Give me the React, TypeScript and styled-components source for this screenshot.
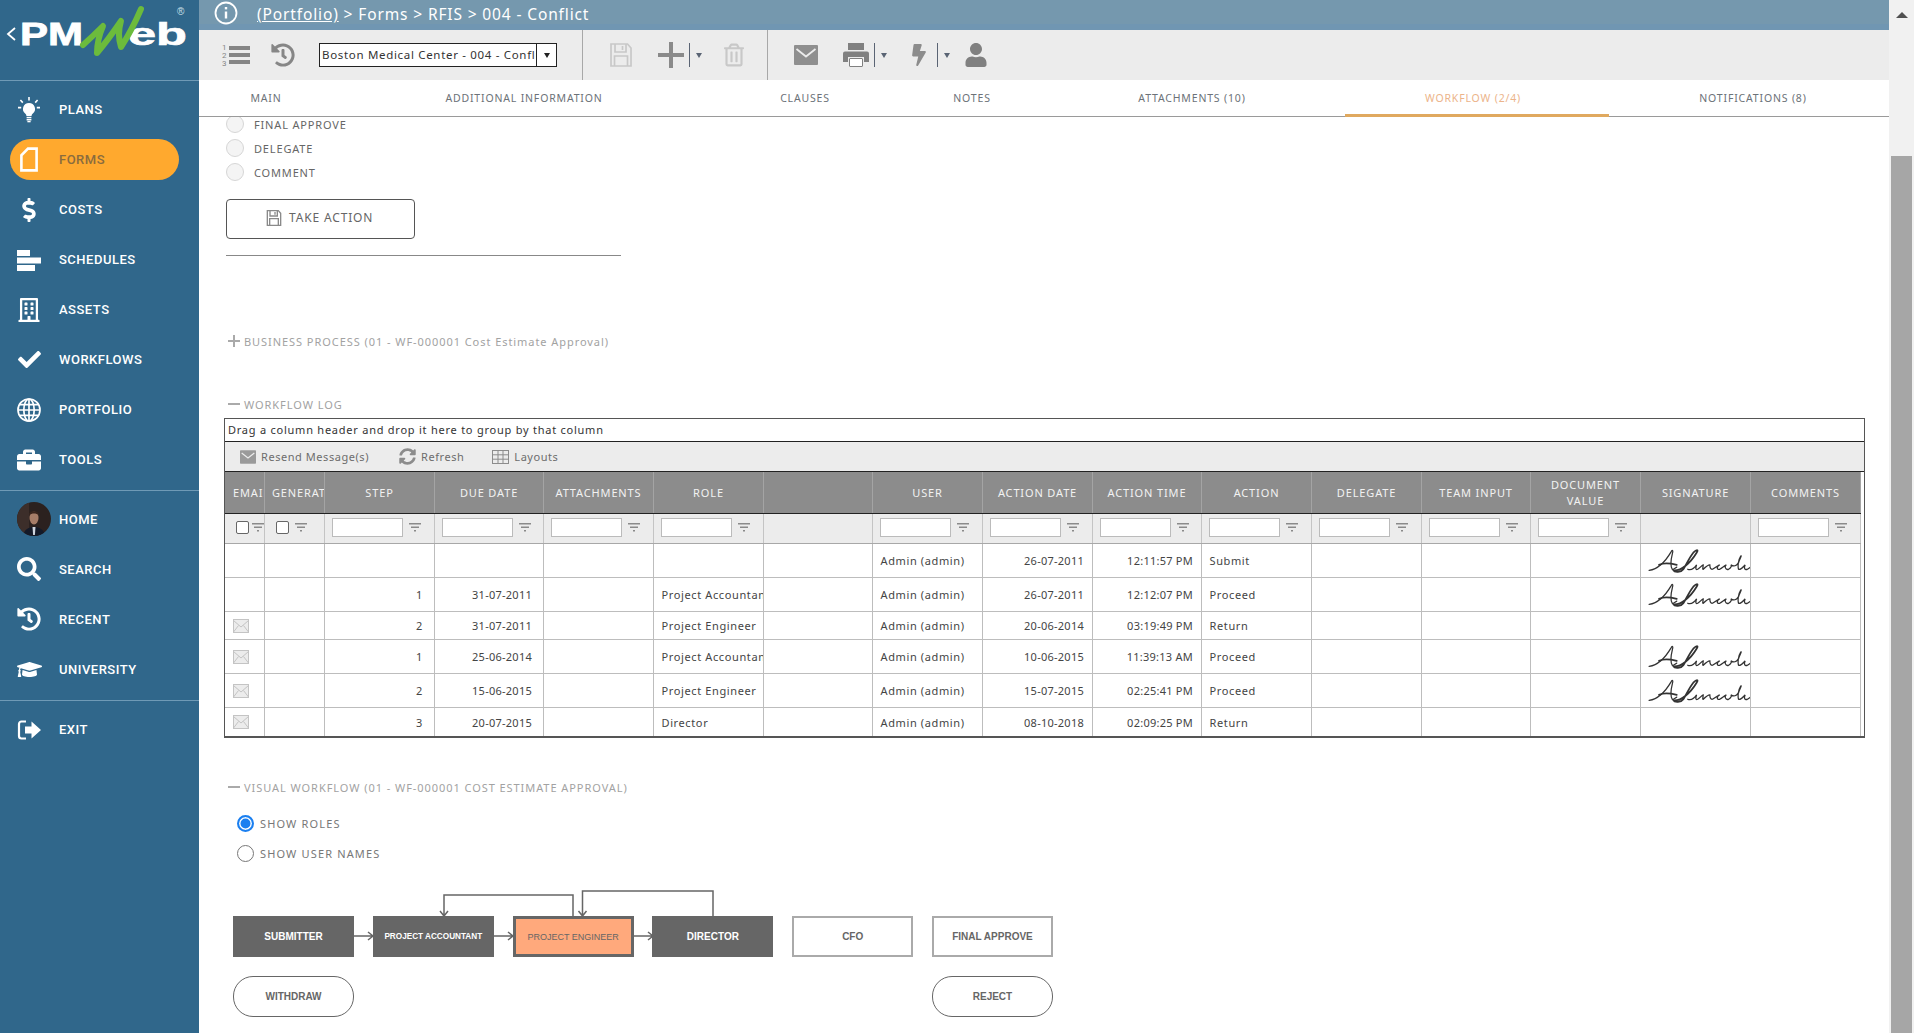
import React from "react";
import styled, { createGlobalStyle } from "styled-components";
import {
  FaDollarSign, FaRegBuilding, FaCheck, FaBriefcase, FaSearch, FaHistory, FaGraduationCap,
  FaRegTrashAlt, FaBolt, FaUser, FaSyncAlt,
} from "react-icons/fa";

const UI = `"Noto Sans", Roboto, sans-serif`;
const NAVFONT = `Roboto, "Liberation Sans", sans-serif`;

const Global = createGlobalStyle`
  html, body { margin: 0; padding: 0; overflow: hidden; background: #fff; }
  * { box-sizing: border-box; }
`;

const Shell = styled.div`display: flex; width: 1914px; height: 1033px; overflow: hidden; font-family: ${UI};`;
const Sidebar = styled.aside`width: 199px; flex: none; background: #30678b; display: flex; flex-direction: column;`;
const LogoBox = styled.div`height: 81px; border-bottom: 1px solid #6f9ab6; flex: none;`;
const NavGroup = styled.nav`display: flex; flex-direction: column; gap: 9px; padding: ${p => p.$pt}px 0 ${p => p.$pb}px; border-bottom: ${p => (p.$last ? "none" : "1px solid #6f9ab6")};`;
const NavItem = styled.a`
  display: flex; align-items: center; height: 41px; width: 169px; margin-left: 10px; padding-left: 7px;
  border-radius: 21px; background: ${p => (p.$active ? "#ffa92e" : "transparent")};
  color: ${p => (p.$active ? "#8a6c3e" : "#fff")}; font: 500 13px ${NAVFONT}; letter-spacing: .5px;
`;
const NavIcon = styled.span`width: 24px; height: 26px; margin-right: 18px; display: flex; align-items: center; justify-content: ${p => (p.$start ? "flex-start" : "center")}; color: #fff; flex: none;
  svg { flex: none; }
`;

const Main = styled.div`flex: 1; min-width: 0; display: flex; flex-direction: column;`;
const TopBar = styled.header`
  height: 30px; flex: none; background: #7598ae; border-bottom: 6px solid #7096b2; color: #fff;
  display: flex; align-items: flex-start; padding-left: 15px;
`;
const InfoIcon = styled.svg`width: 24px; height: 24px; margin-top: 1px; margin-right: 19px; flex: none;`;
const Crumb = styled.div`font-size: 15.5px; line-height: 29px; letter-spacing: .87px; white-space: nowrap;`;
const CrumbLink = styled.span`text-decoration: underline;`;

const ToolBar = styled.div`height: 50px; flex: none; background: #ececec; display: flex; align-items: center; padding-left: 23px; color: #8c8c8c;`;
const ToolIcon = styled.span`
  display: flex; width: ${p => p.$w || 24}px; height: 24px; align-items: center; justify-content: center; flex: none;
  margin-left: ${p => p.$ml || 0}px; color: ${p => p.$c || "#868686"};
`;
const PickWrap = styled.div`
  width: 238px; height: 24px; margin-left: 24px; border: 1px solid #222; background: #fff; display: flex; flex: none;
  font-size: 11.5px; letter-spacing: .68px; color: #333;
`;
const PickText = styled.div`width: 217px; padding-left: 2px; line-height: 22px; white-space: nowrap; overflow: hidden; border-right: 1px solid #222;`;
const PickArrow = styled.div`flex: 1; display: flex; align-items: center; justify-content: center;`;
const Tri = styled.i`display: block; width: 0; height: 0; border-left: 3.5px solid transparent; border-right: 3.5px solid transparent; border-top: 5px solid ${p => p.$c || "#222"};`;
const VSep = styled.div`width: 1px; height: 50px; background: #a8a8a8; flex: none; margin-left: ${p => p.$ml}px;`;
const MiniSplit = styled.div`display: flex; align-items: center; margin-left: ${p => p.$ml}px; flex: none; width: 15px; height: 24px; border-left: 1px solid #5a6474; padding-left: 6px;`;

const Tabs = styled.div`height: 37px; flex: none; display: flex; border-bottom: 1px solid #9a9a9a; background: #fff;`;
const Tab = styled.div`
  width: ${p => p.$w}px; flex: none; text-align: center; padding: 10px ${p => p.$pr || 0}px 0 ${p => p.$pl || 0}px; font-size: 10.5px; line-height: 16px; letter-spacing: .83px;
  color: ${p => (p.$active ? "#ecb48a" : "#6c7278")}; height: 37px;
  border-bottom: ${p => (p.$active ? "3px solid #e0a95f" : "none")}; white-space: nowrap;
`;

const Content = styled.main`flex: 1; min-height: 0; overflow: hidden; padding-left: 25px; background: #fff;`;
const RadioList = styled.div`margin-top: -5px; margin-left: 2px;`;
const RadioRow = styled.div`height: 24px; display: flex; align-items: center; font-size: 11px; letter-spacing: .84px; color: #666;`;
const Ghost = styled.span`width: 18px; height: 18px; border-radius: 50%; background: #f4f4f4; border: 1px solid #d6d6d6; margin-right: 10px; flex: none;`;
const ActionBtn = styled.button`
  display: flex; align-items: center; width: 189px; height: 40px; margin: 15px 0 0 2px; padding: 0 0 3px 39px; background: #fff;
  border: 1px solid #555; border-radius: 4px; font: 12px ${UI}; letter-spacing: .85px; color: #666; gap: 7px;
`;
const Rule = styled.hr`width: 395px; height: 1px; background: #888; border: 0; margin: 16px 0 0 2px;`;
const SectionHead = styled.div`
  display: flex; align-items: center; height: 16px; margin-top: ${p => p.$mt}px; margin-left: 4px; padding-bottom: 2px; font-size: 11px; letter-spacing: .94px;
  color: #a2a2a2; white-space: nowrap; gap: 4px;
`;
const Sign = styled.span`display: block; position: relative; width: 12px; height: 12px; flex: none;
  &::before { content: ""; position: absolute; left: 0; right: 0; top: 5px; height: 2px; background: #aaa; }
  &::after { content: ""; position: absolute; top: 0; bottom: 0; left: 5px; width: 2px; background: #aaa; display: ${p => (p.$plus ? "block" : "none")}; }
`;

const Grid = styled.section`width: 1641px; margin-top: 5px; border: 1px solid #555; border-bottom-width: 2px; background: #fff;`;
const GroupBar = styled.div`height: 23px; border-bottom: 1px solid #222; padding-left: 3px; font-size: 11px; line-height: 21px; letter-spacing: .76px; color: #333;`;
const GridTools = styled.div`height: 30px; background: #ececec; border-bottom: 1px solid #222; display: flex; align-items: center; padding-left: 15px; font-size: 11px; letter-spacing: .55px; color: #6c6c6c;`;
const GridTool = styled.span`display: flex; align-items: center; gap: 5px; margin-right: ${p => p.$mr}px;`;

const COLS = "40px 60px 110px 109px 110px 110px 109px 110px 110px 109px 110px 110px 109px 110px 110px 110px";
const Row = styled.div`
  display: grid; grid-template-columns: ${COLS}; width: 1636px; height: ${p => p.$h}px;
  background: ${p => p.$bg || "#fff"}; border-bottom: ${p => (p.$noLine ? "none" : `1px solid ${p.$line || "#bdbdbd"}`)};
`;
const HeadCell = styled.div`
  border-right: 1px solid #a4a4a4; color: #f2f2f2; font-size: 11px; letter-spacing: .86px; line-height: 16px; text-align: center;
  padding: 0 ${p => p.$pad ?? 8}px; overflow: hidden; white-space: nowrap; display: flex; align-items: center; justify-content: ${p => (p.$clip ? "flex-start" : "center")};
`;
const HeadText = styled.span`white-space: pre-line;`;
const FilterCell = styled.div`border-right: 1px solid #c4c4c4; display: flex; align-items: center; padding: 0 0 3px ${p => p.$pad ?? 7}px; gap: ${p => p.$gap ?? 6}px; overflow: hidden;`;
const FilterInput = styled.div`width: 71px; height: 19px; background: #fff; border: 1px solid #bbb; flex: none;`;
const Check = styled.div`width: 13px; height: 13px; background: #fff; border: 1px solid #666; border-radius: 2px; flex: none;`;
const Cell = styled.div`
  border-right: 1px solid #bdbdbd; display: flex; align-items: center; justify-content: ${p => (p.$right ? "flex-end" : "flex-start")};
  padding: 0 ${p => p.$pr ?? 8}px 0 ${p => p.$pl ?? 7.5}px; font-size: 11px; letter-spacing: ${p => (p.$num ? .25 : .62)}px; color: #444; white-space: nowrap; overflow: hidden;
`;

const VisualRadioRow = styled.label`display: flex; align-items: center; height: 24px; margin: ${p => p.$mt}px 0 0 13px; font-size: 11px; letter-spacing: 1.15px; color: #777;`;
const Dot = styled.span`
  width: 17px; height: 17px; border-radius: 50%; margin-right: 6px; flex: none; background: #fff;
  border: ${p => (p.$on ? "2px solid #1a7ff0" : "1px solid #777")};
  box-shadow: ${p => (p.$on ? "inset 0 0 0 1.5px #fff, inset 0 0 0 8px #1a7ff0" : "none")};
`;
const Diagram = styled.div`
  position: relative; margin-top: 14px; padding: 37px 0 0 9px;
  display: grid; grid-template-columns: repeat(6, 121px); column-gap: 18.8px; row-gap: 19px; grid-template-rows: 41px 41px; width: 840px;
`;
const Arrows = styled.svg`position: absolute; left: 0; top: 0; width: 840px; height: 80px; pointer-events: none;`;
const NodeBox = styled.div`
  display: flex; align-items: center; justify-content: center; white-space: nowrap; overflow: hidden;
  font: 700 ${p => p.$fs || 10}px "Liberation Sans", Arial, sans-serif;
  background: ${p => (p.$kind === "dark" ? "#666" : p.$kind === "cur" ? "#ffa97c" : "#fff")};
  color: ${p => (p.$kind === "dark" ? "#fff" : "#666")};
  border: ${p => (p.$kind === "dark" ? "none" : p.$kind === "cur" ? "3px solid #666" : "2px solid #aaa")};
  font-weight: ${p => (p.$kind === "cur" ? 400 : 700)};
`;
const PillNode = styled.div`
  grid-row: 2; grid-column: ${p => p.$col}; display: flex; align-items: center; justify-content: center;
  border: 1px solid #666; border-radius: 20px; font: 700 10px "Liberation Sans", Arial, sans-serif; color: #666;
`;

const Scroll = styled.div`width: 25px; flex: none; background: #f1f1f1; display: flex; flex-direction: column; align-items: center; padding-top: 12px;`;
const ScrollUp = styled.i`display: block; width: 0; height: 0; border-left: 6px solid transparent; border-right: 6px solid transparent; border-bottom: 6px solid #505050;`;
const Thumb = styled.div`width: 21px; flex: 1; margin-top: 138px; background: #a6a6a6;`;

const Bulb = () => (
  <svg width="24" height="26" viewBox="0 0 24 26" fill="#fff">
    <path d="M12 6a6 6 0 0 0-3.6 10.8c.7.6 1 1.2 1 2.2h5.2c0-1 .3-1.6 1-2.2A6 6 0 0 0 12 6z" />
    <rect x="9.6" y="19.8" width="4.8" height="1.5" /><rect x="9.6" y="22" width="4.8" height="1.5" /><rect x="10.4" y="24" width="3.2" height="1.3" />
    <path d="M12 0v3.4M3.4 3l2.4 2.6M20.6 3l-2.4 2.6M1 10.6h3.2M19.8 10.6H23" stroke="#fff" strokeWidth="1.6" />
  </svg>
);
const FormIcon = () => (
  <svg width="20" height="25" viewBox="0 0 20 25" fill="none" stroke="#fff" strokeWidth="2.6">
    <path d="M9 1.6h8.6v21.8H2.4V8.4z" />
  </svg>
);
const SchedIcon = () => (
  <svg width="24" height="24" viewBox="0 0 24 24" fill="#fff">
    <rect x="0" y="2" width="13" height="6" /><rect x="0" y="9.5" width="24" height="6" /><rect x="0" y="17" width="18" height="6" />
  </svg>
);
const GlobeIcon = () => (
  <svg width="24" height="24" viewBox="0 0 24 24" fill="none" stroke="#fff" strokeWidth="1.7">
    <circle cx="12" cy="12" r="11" /><ellipse cx="12" cy="12" rx="5.2" ry="11" /><path d="M12 1v22M1 12h22M2.6 6.6h18.8M2.6 17.4h18.8" />
  </svg>
);
const ExitIcon = () => (
  <svg width="24" height="24" viewBox="0 0 24 24" fill="none">
    <path d="M9 3.5H4.5a2.5 2.5 0 0 0-2.5 2.5v12a2.5 2.5 0 0 0 2.5 2.5H9" stroke="#fff" strokeWidth="2.2" />
    <path d="M8 8.5h6.5V3.6L24 12l-9.5 8.4v-4.9H8z" fill="#fff" />
  </svg>
);
const Avatar = () => (
  <svg width="34" height="34" viewBox="0 0 34 34">
    <defs><clipPath id="av"><circle cx="17" cy="17" r="17" /></clipPath></defs>
    <g clipPath="url(#av)">
      <rect width="34" height="34" fill="#2b211f" /><rect x="0" y="0" width="12" height="34" fill="#3c2e2a" />
      <path d="M6 34c1-7 6-9 11-9s10 2 11 9z" fill="#141a28" />
      <ellipse cx="17" cy="16" rx="4.500" ry="6.500" fill="#a67d68" /><path d="M12 13c0-5 10-5 10 0-3-2-7-2-10 0z" fill="#3a261e" />
      <path d="M15.500 25h3l-.6 8h-1.800z" fill="#cfd5de" />
    </g>
  </svg>
);
const ListIcon = () => (
  <svg width="28" height="26" viewBox="0 0 28 26" fill="#858585">
    <rect x="7" y="4" width="21" height="4" /><rect x="7" y="11" width="21" height="4" /><rect x="7" y="18" width="21" height="4" />
    <text x="0" y="8" fontSize="8" fontFamily="Roboto">1</text><text x="0" y="16" fontSize="8" fontFamily="Roboto">2</text><text x="0" y="24" fontSize="8" fontFamily="Roboto">3</text>
  </svg>
);
const Floppy = ({ s = 24, c = "#c8c8c8", w = 1.7 }: { s?: number; c?: string; w?: number }) => (
  <svg width={s} height={s} viewBox="0 0 24 24" fill="none" stroke={c} strokeWidth={w}>
    <path d="M2 1h16.500L22 5v18H2z" /><path d="M6 1v8h11V1M13.500 3v4" /><path d="M5.500 23v-10h13v10" />
  </svg>
);
const PlusIcon = () => (
  <svg width="26" height="26" viewBox="0 0 26 26" fill="#8a8a8a"><rect x="0" y="11" width="26" height="4" /><rect x="11" y="0" width="4" height="26" /></svg>
);
const PrinterIcon = () => (
  <svg width="26" height="24" viewBox="0 0 26 24" fill="#808080">
    <rect x="5" y="0" width="16" height="7" />
    <path d="M2 8.500h22a2 2 0 0 1 2 2V19h-5v-5H5v5H0v-8.500a2 2 0 0 1 2-2z" />
    <rect x="6.500" y="15.500" width="13" height="8" rx=".5" fill="#fff" stroke="#808080" />
  </svg>
);
const Mail = ({ w = 24, h = 20, c = "#8f8f8f" }: { w?: number; h?: number; c?: string }) => (
  <svg width={w} height={h} viewBox="0 0 24 20">
    <rect x="0" y="0" width="24" height="20" rx="1" fill={c} />
    <path d="M2.500 4l9.500 7.500L21.500 4" fill="none" stroke="#ececec" strokeWidth="1.800" />
  </svg>
);
const RowMail = () => (
  <svg width="16" height="14" viewBox="0 0 16 14" fill="#ececec" stroke="#c4c4c4">
    <rect x=".5" y=".5" width="15" height="13" /><path d="M.5 1.500L8 8l7.500-6.500M.5 13l5-6.500M15.500 13l-5-6.500" fill="none" />
  </svg>
);
const Funnel = () => (
  <svg width="12" height="11" viewBox="0 0 12 11" fill="#8a8a8a" style={{ flex: "none" }}>
    <rect x="0" y="1" width="12" height="1.500" /><rect x="2" y="4.500" width="8" height="1.500" /><rect x="5" y="8" width="2" height="1.500" />
  </svg>
);
const Signature = () => (
  <svg width="109" height="32" viewBox="0 0 98 29" fill="none" stroke="#333" strokeWidth="1.150" strokeLinecap="round" style={{ flex: "none" }}>
    <path d="M7 23C14 22 20 18 27 6c1-2 2-1 1 2-1 4-2 11 0 14 1 1 2-1 4-2" />
    <path d="M16 18c4-2 12-1 16 0" strokeWidth="1.700" />
    <path d="M30 23c6 0 14-6 20-16 2-3 0-3-3 0-4 5-7 12-9 15-2 3-8 3-9 1" strokeWidth="1.600" />
    <path d="M42 22c3 1 6-1 8-4-1 3-1 5 1 4s4-4 5-4c0 2-1 4 0 4 2-2 4-4 6-4 0 2 0 4 2 4s4-3 7-4c-3 1-3 5 0 4 2-1 4-3 6-4-2 1-1 5 2 4 2-1 3-3 2-4 3 2 5 1 7-2 2-5 3-7 2-6-2 3-3 9-2 12 2 1 4-2 6-4-1 2-1 5 2 4 2-1 4-3 6-4" />
  </svg>
);

const navA = [
  ["PLANS", <Bulb />], ["FORMS", <FormIcon />], ["COSTS", <FaDollarSign size={24} />], ["SCHEDULES", <SchedIcon />],
  ["ASSETS", <FaRegBuilding size={24} />], ["WORKFLOWS", <FaCheck size={23} />], ["PORTFOLIO", <GlobeIcon />], ["TOOLS", <FaBriefcase size={24} />],
] as const;
const navB = [
  ["SEARCH", <FaSearch size={24} />], ["RECENT", <FaHistory size={24} />], ["UNIVERSITY", <FaGraduationCap size={25} />],
] as const;

const heads = ["EMAIL", "GENERATE", "STEP", "DUE DATE", "ATTACHMENTS", "ROLE", "", "USER", "ACTION DATE", "ACTION TIME", "ACTION", "DELEGATE", "TEAM INPUT", "DOCUMENT\nVALUE", "SIGNATURE", "COMMENTS"];
const rows = [
  { h: 34, mail: 0, step: "", due: "", role: "", d: "26-07-2011", t: "12:11:57 PM", a: "Submit", sig: 1 },
  { h: 34, mail: 0, step: "1", due: "31-07-2011", role: "Project Accountant", d: "26-07-2011", t: "12:12:07 PM", a: "Proceed", sig: 1 },
  { h: 28, mail: 1, step: "2", due: "31-07-2011", role: "Project Engineer", d: "20-06-2014", t: "03:19:49 PM", a: "Return", sig: 0 },
  { h: 34, mail: 1, step: "1", due: "25-06-2014", role: "Project Accountant", d: "10-06-2015", t: "11:39:13 AM", a: "Proceed", sig: 1 },
  { h: 34, mail: 1, step: "2", due: "15-06-2015", role: "Project Engineer", d: "15-07-2015", t: "02:25:41 PM", a: "Proceed", sig: 1 },
  { h: 28, mail: 1, step: "3", due: "20-07-2015", role: "Director", d: "08-10-2018", t: "02:09:25 PM", a: "Return", sig: 0, last: true },
];
const tabs = [
  ["MAIN", 134, 0, 0], ["ADDITIONAL INFORMATION", 382, 0, 0], ["CLAUSES", 180, 0, 0], ["NOTES", 154, 0, 0], ["ATTACHMENTS (10)", 296, 10, 0], ["WORKFLOW (2/4)", 264, 8, 0], ["NOTIFICATIONS (8)", 280, 0, 8],
] as const;
const nodes = [
  ["SUBMITTER", "dark", 10], ["PROJECT ACCOUNTANT", "dark", 8.2], ["PROJECT ENGINEER", "cur", 9], ["DIRECTOR", "dark", 10], ["CFO", "line", 10], ["FINAL APPROVE", "line", 10],
] as const;

export default function App() {
  return (
    <Shell>
      <Global />
      <Sidebar>
        <LogoBox>
          <svg width="199" height="80" viewBox="0 0 199 80">
            <path d="M15 28l-7 6 7 6" fill="none" stroke="#fff" strokeWidth="1.800" />
            <text x="20" y="45" fontFamily="Liberation Sans" fontWeight="700" fontSize="31" fill="#fff" stroke="#fff" strokeWidth=".8" textLength="63" lengthAdjust="spacingAndGlyphs">PM</text>
            <text x="128" y="45" fontFamily="Liberation Sans" fontWeight="700" fontSize="31" fill="#fff" stroke="#fff" strokeWidth=".6" textLength="59" lengthAdjust="spacingAndGlyphs">eb</text>
            <path d="M83 45Q93 36 103 26Q97 40 97 53Q108 40 121 21Q117 35 121 47Q132 30 141 9" fill="none" stroke="#6cbb3c" strokeWidth="6" strokeLinejoin="round" strokeLinecap="round" />
            <text x="177" y="15" fontFamily="Liberation Sans" fontSize="10" fill="#cfe0ea">®</text>
          </svg>
        </LogoBox>
        <NavGroup $pt={8} $pb={10}>
          {navA.map(([t, ic]) => (
            <NavItem key={t} $active={t === "FORMS"}><NavIcon>{ic}</NavIcon>{t}</NavItem>
          ))}
        </NavGroup>
        <NavGroup $pt={7.5} $pb={10}>
          <NavItem><NavIcon $start><Avatar /></NavIcon>HOME</NavItem>
          {navB.map(([t, ic]) => (
            <NavItem key={t}><NavIcon>{ic}</NavIcon>{t}</NavItem>
          ))}
        </NavGroup>
        <NavGroup $pt={8.5} $pb={0} $last>
          <NavItem><NavIcon><ExitIcon /></NavIcon>EXIT</NavItem>
        </NavGroup>
      </Sidebar>
      <Main>
        <TopBar>
          <InfoIcon viewBox="0 0 24 24" fill="none" stroke="#fff" strokeWidth="1.800">
            <circle cx="12" cy="12" r="10.500" /><path d="M12 10.500v7" strokeWidth="2.400" /><path d="M12 6v2.400" strokeWidth="2.400" />
          </InfoIcon>
          <Crumb><CrumbLink>(Portfolio)</CrumbLink> &gt; Forms &gt; RFIS &gt; 004 - Conflict</Crumb>
        </TopBar>
        <ToolBar>
          <ToolIcon $w={28}><ListIcon /></ToolIcon>
          <ToolIcon $ml={21}><FaHistory size={24} /></ToolIcon>
          <PickWrap><PickText>Boston Medical Center - 004 - Conflict</PickText><PickArrow><Tri /></PickArrow></PickWrap>
          <VSep $ml={25} />
          <ToolIcon $ml={26}><Floppy /></ToolIcon>
          <ToolIcon $ml={25} $w={26}><PlusIcon /></ToolIcon>
          <MiniSplit $ml={5}><Tri $c="#5a6474" /></MiniSplit>
          <ToolIcon $ml={20} $w={20} $c="#c8c8c8"><FaRegTrashAlt size={24} /></ToolIcon>
          <VSep $ml={23} />
          <ToolIcon $ml={26} $c="#8f8f8f"><Mail /></ToolIcon>
          <ToolIcon $ml={25} $w={26}><PrinterIcon /></ToolIcon>
          <MiniSplit $ml={5}><Tri $c="#5a6474" /></MiniSplit>
          <ToolIcon $ml={23} $w={14} $c="#8c8c8c"><FaBolt size={22} /></ToolIcon>
          <MiniSplit $ml={11}><Tri $c="#5a6474" /></MiniSplit>
          <ToolIcon $ml={12} $c="#808080"><FaUser size={24} /></ToolIcon>
        </ToolBar>
        <Tabs>
          {tabs.map(([t, w, pr, pl]) => (
            <Tab key={t} $w={w} $pr={pr} $pl={pl} $active={t.startsWith("WORKFLOW")}>{t}</Tab>
          ))}
        </Tabs>
        <Content>
          <RadioList>
            {["FINAL APPROVE", "DELEGATE", "COMMENT"].map(t => (
              <RadioRow key={t}><Ghost />{t}</RadioRow>
            ))}
          </RadioList>
          <ActionBtn><Floppy s={16} c="#8a8a8a" w={2} />TAKE ACTION</ActionBtn>
          <Rule />
          <SectionHead $mt={78}><Sign $plus />BUSINESS PROCESS (01 - WF-000001 Cost Estimate Approval)</SectionHead>
          <SectionHead $mt={47}><Sign />WORKFLOW LOG</SectionHead>
          <Grid>
            <GroupBar>Drag a column header and drop it here to group by that column</GroupBar>
            <GridTools>
              <GridTool $mr={30}><Mail w={16} h={14} c="#9a9a9a" />Resend Message(s)</GridTool>
              <GridTool $mr={28}><FaSyncAlt size={17} color="#8c8c8c" />Refresh</GridTool>
              <GridTool $mr={0}>
                <svg width="17" height="14" viewBox="0 0 17 14" fill="none" stroke="#8c8c8c"><rect x=".5" y=".5" width="16" height="13" /><path d="M.5 4.800h16M.5 9.200h16M6 .5v13M11 .5v13" /></svg>
                Layouts
              </GridTool>
            </GridTools>
            <Row $h={42} $bg="#8c8c8c" $line="#222">
              {heads.map((h, i) => (
                <HeadCell key={i} $clip={i < 2} $pad={i === 1 ? 7 : 8}><HeadText>{h}</HeadText></HeadCell>
              ))}
            </Row>
            <Row $h={30} $bg="#ececec" $line="#a8a8a8">
              <FilterCell $pad={11} $gap={3}><Check /><Funnel /></FilterCell>
              <FilterCell $pad={11}><Check /><Funnel /></FilterCell>
              {heads.slice(2).map((h, i) =>
                h === "" || h === "SIGNATURE" ? <FilterCell key={i} /> : <FilterCell key={i}><FilterInput /><Funnel /></FilterCell>
              )}
            </Row>
            {rows.map((r, i) => (
              <Row key={i} $h={r.h} $noLine={r.last}>
                <Cell>{r.mail ? <RowMail /> : null}</Cell>
                <Cell />
                <Cell $right $pr={11}>{r.step}</Cell>
                <Cell $right $num $pr={11}>{r.due}</Cell>
                <Cell />
                <Cell $pr={0}>{r.role}</Cell>
                <Cell />
                <Cell>Admin (admin)</Cell>
                <Cell $right $num>{r.d}</Cell>
                <Cell $right $num>{r.t}</Cell>
                <Cell>{r.a}</Cell>
                <Cell /><Cell /><Cell />
                <Cell $pl={0} $pr={0}>{r.sig ? <Signature /> : null}</Cell>
                <Cell />
              </Row>
            ))}
          </Grid>
          <SectionHead $mt={42}><Sign />VISUAL WORKFLOW (01 - WF-000001 COST ESTIMATE APPROVAL)</SectionHead>
          <VisualRadioRow $mt={15}><Dot $on />SHOW ROLES</VisualRadioRow>
          <VisualRadioRow $mt={6}><Dot />SHOW USER NAMES</VisualRadioRow>
          <Diagram>
            {nodes.map(([t, k, fs]) => (
              <NodeBox key={t} $kind={k} $fs={fs}>{t}</NodeBox>
            ))}
            <PillNode $col={1}>WITHDRAW</PillNode>
            <PillNode $col={6}>REJECT</PillNode>
            <Arrows viewBox="0 0 840 80" fill="none" stroke="#666" strokeWidth="1.500">
              <path d="M130 57h19M144 53l5 4-5 4M270 57h19M284 53l5 4-5 4M410 57h19M424 53l5 4-5 4" />
              <path d="M349 37V16H220v21M216 32l4 5 4-5" />
              <path d="M489 37V12H358.500v25M354.500 32l4 5 4-5" />
            </Arrows>
          </Diagram>
        </Content>
      </Main>
      <Scroll><ScrollUp /><Thumb /></Scroll>
    </Shell>
  );
}
